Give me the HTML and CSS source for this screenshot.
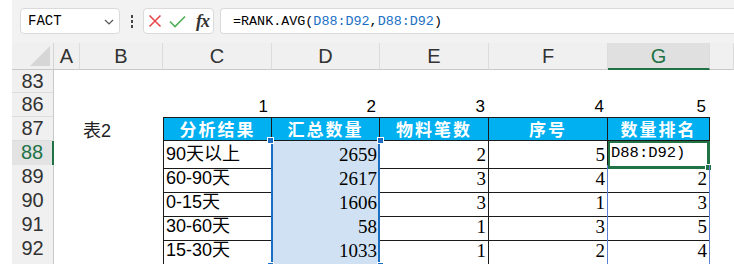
FILE: index.html
```html
<!DOCTYPE html>
<html lang="zh-CN">

<head>
    <meta charset="UTF-8">
    <title>RANK.AVG</title>
    <link rel="stylesheet" href="styles.css">
</head>

<body>
    <div class="app">
        <div class="toolbar">
            <div class="namebox">
                <span>FACT</span>
                <svg class="chevron" width="10" height="6" viewBox="0 0 10 6"><path d="M1 1 L5 5 L9 1" fill="none" stroke="#555" stroke-width="1.2"/></svg>
            </div>
            <div class="dots"><i></i><i></i><i></i></div>
            <div class="fxbox">
                <svg width="14" height="14" viewBox="0 0 14 14"><path d="M1.5 1.5 L12.5 12.5 M12.5 1.5 L1.5 12.5" stroke="#e8474a" stroke-width="1.6" fill="none"/></svg>
                <svg width="17" height="13" viewBox="0 0 17 13"><path d="M1 6.5 L6 11.5 L16 1.5" stroke="#4fae57" stroke-width="1.6" fill="none"/></svg>
                <span class="fx">fx</span>
            </div>
            <div class="formula">=RANK.AVG(<span class="ref">D88:D92</span>,<span class="ref">D88:D92</span>)</div>
        </div>

        <div class="sheet">
            <div class="row colhead">
                <div class="corner"></div>
                <div class="ch">A</div>
                <div class="ch">B</div>
                <div class="ch">C</div>
                <div class="ch">D</div>
                <div class="ch">E</div>
                <div class="ch">F</div>
                <div class="ch active">G</div>
                <div class="ch"></div>
            </div>

            <div class="row r23">
                <div class="rh">83</div>
            </div>

            <div class="row">
                <div class="rh">86</div>
                <div></div>
                <div></div>
                <div class="idx">1</div>
                <div class="idx">2</div>
                <div class="idx">3</div>
                <div class="idx">4</div>
                <div class="idx">5</div>
            </div>

            <div class="row">
                <div class="rh">87</div>
                <div></div>
                <div class="label">表2</div>
                <div class="t th first">分析结果</div>
                <div class="t th">汇总数量</div>
                <div class="t th">物料笔数</div>
                <div class="t th">序号</div>
                <div class="t th">数量排名</div>
            </div>

            <div class="row">
                <div class="rh cur">88</div>
                <div></div>
                <div></div>
                <div class="t first txt sel-l">90天以上</div>
                <div class="t num sel sel-top">2659</div>
                <div class="t num">2</div>
                <div class="t num">5</div>
                <div class="t edit">D88:D92)</div>
            </div>

            <div class="row">
                <div class="rh">89</div>
                <div></div>
                <div></div>
                <div class="t first txt sel-l">60-90天</div>
                <div class="t num sel">2617</div>
                <div class="t num">3</div>
                <div class="t num spill-l">4</div>
                <div class="t num spill">2</div>
            </div>

            <div class="row">
                <div class="rh">90</div>
                <div></div>
                <div></div>
                <div class="t first txt sel-l">0-15天</div>
                <div class="t num sel">1606</div>
                <div class="t num">3</div>
                <div class="t num spill-l">1</div>
                <div class="t num spill">3</div>
            </div>

            <div class="row">
                <div class="rh">91</div>
                <div></div>
                <div></div>
                <div class="t first txt sel-l">30-60天</div>
                <div class="t num sel">58</div>
                <div class="t num">1</div>
                <div class="t num spill-l">3</div>
                <div class="t num spill">5</div>
            </div>

            <div class="row">
                <div class="rh">92</div>
                <div></div>
                <div></div>
                <div class="t first txt sel-l">15-30天</div>
                <div class="t num sel sel-bottom">1033</div>
                <div class="t num">1</div>
                <div class="t num spill-l">2</div>
                <div class="t num spill spill-b">4</div>
            </div>

            <div class="row rest">
                <div class="rh"></div>
            </div>
        </div>
    </div>
</body>

</html>
```

FILE: styles.css
```css
body {
    margin: 0;
    background-color: #fff;
    font-family: 'Liberation Sans', 'Noto Sans CJK SC', sans-serif;
    color: #000;
}

.app {
    width: 734px;
    height: 264px;
    padding-left: 12px;
    box-sizing: border-box;
    overflow: hidden;
}

/* formula bar */

.toolbar {
    height: 43px;
    background-color: #f2f2f2;
    display: flex;
    align-items: flex-start;
    padding: 8px 0 0 8px;
    box-sizing: border-box;
}

.namebox,
.fxbox,
.formula {
    height: 26px;
    background-color: #fff;
    border: 1px solid #dadada;
    border-radius: 4px;
    box-sizing: border-box;
    display: flex;
    align-items: center;
}

.namebox {
    width: 100px;
    padding: 0 5px 0 7px;
    justify-content: space-between;
    font-family: 'Liberation Mono', monospace;
    font-size: 14px;
}

.chevron {
    margin-top: 2px;
}

.dots {
    width: 23px;
    height: 26px;
    display: flex;
    flex-direction: column;
    align-items: center;
    justify-content: center;
    gap: 2px;
}

.dots i {
    width: 2px;
    height: 3px;
    background-color: #444;
}

.fxbox {
    width: 71px;
    padding: 0 3px 0 4px;
    gap: 7px;
}

.fx {
    font-family: 'Liberation Serif', serif;
    font-style: italic;
    font-weight: bold;
    font-size: 18px;
    color: #333;
    margin-left: 3px;
    letter-spacing: -1px;
}

.formula {
    flex: 1;
    margin-left: 6px;
    padding-left: 12px;
    border-right: none;
    border-radius: 4px 0 0 4px;
    font-family: 'Liberation Mono', monospace;
    font-size: 13.4px;
}

.ref {
    color: #1a6fc4;
}

/* grid */

.row {
    display: grid;
    grid-template-columns: 42px 26px 83px 109px 108px 109px 119px 102px 1fr;
    height: 24px;
}

.row > div {
    box-sizing: border-box;
    min-width: 0;
    white-space: nowrap;
    overflow: hidden;
}

.row.r23 {
    height: 23px;
}

.row.rest {
    height: 10px;
}

.colhead {
    height: 27px;
    background-color: #f0f0f0;
}

.corner {
    position: relative;
    border-right: 1px solid #d4d4d4;
    border-bottom: 1px solid #c8c8c8;
}

.corner::after {
    content: "";
    position: absolute;
    right: 3px;
    bottom: 3px;
    width: 0;
    height: 0;
    border-left: 20px solid transparent;
    border-bottom: 20px solid #d6d6d6;
}

.ch {
    border-right: 1px solid #dcdcdc;
    border-bottom: 1px solid #c8c8c8;
    text-align: center;
    font-size: 20px;
    line-height: 26px;
    color: #333;
}

.ch.active {
    background-color: #e0e0e0;
    color: #217346;
    border-bottom: 2px solid #217346;
}

.rh {
    background-color: #f0f0f0;
    border-right: 1px solid #c8c8c8;
    border-bottom: 1px solid #dcdcdc;
    text-align: center;
    font-size: 20px;
    line-height: 23px;
    color: #333;
}

.rh.cur {
    background-color: #e3e3e3;
    color: #217346;
    border-right: 2px solid #217346;
}

.idx {
    text-align: right;
    padding-right: 4px;
    font-size: 17px;
    line-height: 28px;
}

.label {
    padding-left: 3px;
    font-size: 18px;
    line-height: 28px;
    color: #222;
}

/* table */

.t {
    border-right: 1px solid #1a1a1a;
    border-bottom: 1px solid #1a1a1a;
    position: relative;
    overflow: visible !important;
}

.t.first {
    border-left: 1px solid #1a1a1a;
}

.th {
    border-top: 1px solid #1a1a1a;
    background-color: #00b0f0;
    color: #fff;
    font-family: 'Noto Sans CJK SC', sans-serif;
    font-weight: bold;
    font-size: 17px;
    letter-spacing: 2px;
    text-align: center;
    line-height: 22px;
}

.txt {
    padding-left: 2px;
    font-size: 18px;
    line-height: 26px;
}

.num {
    text-align: right;
    padding-right: 2px;
    font-family: 'Liberation Serif', serif;
    font-size: 19px;
    line-height: 27px;
}

.edit {
    padding-left: 3px;
    font-family: 'Liberation Mono', monospace;
    font-size: 15.5px;
    line-height: 25px;
    box-shadow: inset 0 0 0 2px #217346;
    border-right-color: #217346;
    border-bottom-color: #217346;
}

.edit::after {
    content: "";
    position: absolute;
    right: -3px;
    bottom: -3px;
    width: 5px;
    height: 5px;
    background-color: #217346;
    border: 1px solid #fff;
}

/* formula reference highlight on D88:D92 */

.sel-l {
    border-right-color: #1a6fc4;
}

.sel {
    background-color: #cfe1f3;
    border-right-color: #1a6fc4;
    box-shadow: inset 1px 0 #1a6fc4, inset -1px 0 #1a6fc4;
}

.sel-bottom {
    border-bottom: 2px solid #1a6fc4;
}

.sel-top::before,
.sel-top::after,
.sel-bottom::before,
.sel-bottom::after {
    content: "";
    position: absolute;
    width: 5px;
    height: 5px;
    background-color: #1a6fc4;
    border: 1px solid #fff;
    z-index: 2;
}

.sel-top::before {
    left: -5px;
    top: -4px;
}

.sel-top::after {
    right: -5px;
    top: -4px;
}

.sel-bottom::before {
    left: -5px;
    bottom: -5px;
}

.sel-bottom::after {
    right: -5px;
    bottom: -5px;
}

/* G89:G92 outline */

.spill-l {
    border-right-color: #5a7fd4;
}

.spill {
    border-right-color: #5a7fd4;
}

.spill-b {
    border-bottom-color: #5a7fd4;
}
```
